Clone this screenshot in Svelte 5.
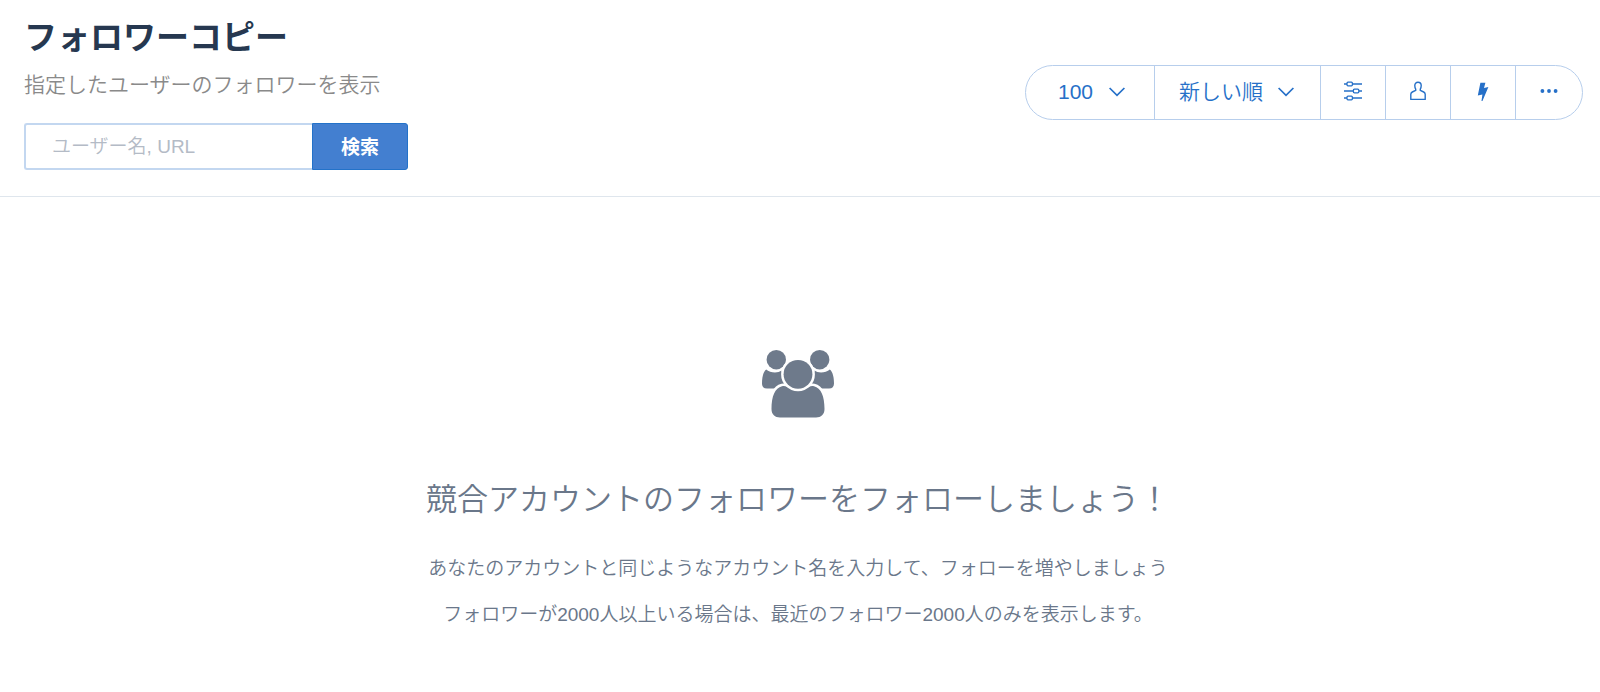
<script lang="ts">
    const limits = ["100", "200", "500"];
    const orders = ["新しい順", "古い順"];

    let account = $state("");
    let limit = $state("100");
    let order = $state("新しい順");

    function search(event: SubmitEvent) {
        event.preventDefault();
    }
</script>

<header class="page-header">
    <div class="page-header__main">
        <h1 class="page-header__title">フォロワーコピー</h1>
        <p class="page-header__description">指定したユーザーのフォロワーを表示</p>

        <form class="search" onsubmit={search}>
            <input
                class="search__input"
                type="text"
                aria-label="ユーザー名, URL"
                placeholder="ユーザー名, URL"
                bind:value={account}
            />
            <button class="search__button" type="submit">検索</button>
        </form>
    </div>

    <div class="toolbar">
        <div class="toolbar__item picker picker--limit">
            <select class="picker__select" aria-label="表示件数" bind:value={limit}>
                {#each limits as value}
                    <option {value}>{value}</option>
                {/each}
            </select>
            {@render chevron()}
        </div>
        <div class="toolbar__item picker">
            <select class="picker__select" aria-label="並び順" bind:value={order}>
                {#each orders as value}
                    <option {value}>{value}</option>
                {/each}
            </select>
            {@render chevron()}
        </div>
        <button class="toolbar__item toolbar__button" type="button" aria-label="フィルター">
            <svg width="20" height="20" viewBox="0 0 20 20" fill="none" stroke="currentColor" stroke-width="1.3">
                <path d="M1 3h3M9.5 3H19M1 10h9M16 10h3M1 17h3M9.5 17H19" />
                <rect x="4" y="1.2" width="5.4" height="3.6" rx="1" />
                <rect x="10.4" y="8.2" width="5.4" height="3.6" rx="1" />
                <rect x="4" y="15.2" width="5.4" height="3.6" rx="1" />
            </svg>
        </button>
        <button class="toolbar__item toolbar__button" type="button" aria-label="ユーザー">
            <svg width="20" height="20" viewBox="0 0 20 20" fill="none" stroke="currentColor" stroke-width="1.4" stroke-linejoin="round">
                <path d="M7.7 8.2C7 7 6.8 6 6.8 4.6C6.8 2.500 8 1.200 10 1.200s3.200 1.300 3.200 3.400c0 1.400-.2 2.400-.9 3.600v1.200l3.400 1.600c1 .5 1.500 1.200 1.500 2.200v5.200H2.800v-5.200c0-1 .5-1.700 1.500-2.200l3.400-1.600z" />
            </svg>
        </button>
        <button class="toolbar__item toolbar__button" type="button" aria-label="一括操作">
            <svg width="20" height="20" viewBox="0 0 20 20" fill="currentColor">
                <path d="M7.400 1.800h5l-1.400 5.200 4.400-.9L9.200 20.600h-.8l1-7.200-4.600 1z" />
            </svg>
        </button>
        <button class="toolbar__item toolbar__button toolbar__button--last" type="button" aria-label="その他">
            <svg width="20" height="20" viewBox="0 0 20 20" fill="currentColor">
                <circle cx="3.400" cy="10" r="1.900" />
                <circle cx="10" cy="10" r="1.900" />
                <circle cx="16.600" cy="10" r="1.900" />
            </svg>
        </button>
    </div>
</header>

<main class="empty">
    <svg class="empty__icon" width="72" height="68" viewBox="0 0 72 68" fill="currentColor" aria-hidden="true">
        <path d="M4.200 19.500C8 23 16 23.500 19.500 20.500L24 38.500H5C1.600 38.500 0 36.500 0 33.500C0 28 1 22 4.200 19.500z" />
        <path d="M67.800 19.500C64 23 56 23.500 52.500 20.500L48 38.500H67C70.400 38.500 72 36.500 72 33.500C72 28 71 22 67.800 19.500z" />
        <circle cx="14.300" cy="9.700" r="9.700" />
        <circle cx="57.700" cy="9.700" r="9.700" />
        <path
            class="empty__front"
            d="M20 36.200C13 38 9.500 46 9.500 59C9.500 64.500 13 67.500 18 67.500H54C59 67.500 62.500 64.500 62.500 59C62.500 46 59 38 52 36.200C49 35.500 47.500 36.500 46 37.500H26C24.500 36.500 23 35.500 20 36.200z"
        />
        <circle class="empty__front" cx="36" cy="24.300" r="14.400" />
    </svg>
    <h2 class="empty__title">競合アカウントのフォロワーをフォローしましょう！</h2>
    <p class="empty__text">あなたのアカウントと同じようなアカウント名を入力して、フォローを増やしましょう</p>
    <p class="empty__text">フォロワーが2000人以上いる場合は、最近のフォロワー2000人のみを表示します。</p>
</main>

{#snippet chevron()}
    <svg class="picker__chevron" width="16" height="10" viewBox="0 0 16 10" fill="none" stroke="currentColor" stroke-width="1.700" aria-hidden="true">
        <path d="M.6 1L8 8.400 15.400 1" />
    </svg>
{/snippet}

<style>
    :global(body) {
        background: #fff;
        font-family: "Liberation Sans", "Noto Sans CJK JP", sans-serif;
        font-weight: 350;
    }

    .page-header {
        display: flex;
        align-items: center;
        justify-content: space-between;
        gap: 24px;
        padding: 15px 17px 26px 24px;
        border-bottom: 1px solid #dfe6ed;
    }

    .page-header__title {
        margin: 0;
        color: #263850;
        font-size: 33px;
        font-weight: 700;
        line-height: 46px;
    }

    .page-header__description {
        margin: 8px 0 22px;
        color: #8a8a8a;
        font-size: 21px;
        line-height: 32px;
    }

    .search {
        display: flex;
        height: 47px;
    }

    .search__input,
    .search__button {
        box-sizing: border-box;
        margin: 0;
        font-family: inherit;
        font-size: 19px;
    }

    .search__input {
        width: 288px;
        padding: 0 26px;
        border: 2px solid #c3d7f0;
        border-right: 0;
        border-radius: 3px 0 0 3px;
        color: #263850;
        font-weight: 350;
        outline: none;
    }

    .search__input::placeholder {
        color: #b4bbc6;
        opacity: 1;
    }

    .search__button {
        width: 96px;
        padding: 0 0 3px;
        border: 1px solid #2372c9;
        border-radius: 0 3px 3px 0;
        background: #437fd0;
        color: #fff;
        font-weight: 700;
        cursor: pointer;
    }

    .toolbar {
        display: flex;
        height: 53px;
        border: 1px solid #b7ceec;
        border-radius: 28px;
        color: #2670c8;
        overflow: hidden;
    }

    .toolbar__item + .toolbar__item {
        border-left: 1px solid #b7ceec;
    }

    .toolbar__button {
        display: flex;
        align-items: center;
        justify-content: center;
        box-sizing: border-box;
        width: 65px;
        padding: 0 0 4px;
        border: 0;
        background: none;
        color: inherit;
        cursor: pointer;
    }

    .toolbar__button--last {
        width: 67px;
    }

    /* The chevron shares the select's cell so the whole area stays clickable. */
    .picker {
        display: grid;
        align-items: center;
    }

    .picker__select,
    .picker__chevron {
        grid-area: 1 / 1;
    }

    .picker__select {
        height: 100%;
        padding: 0 57px 2px 24px;
        border: 0;
        background: none;
        color: inherit;
        font-family: inherit;
        font-size: 21px;
        font-weight: 350;
        appearance: none;
        cursor: pointer;
        outline: none;
    }

    .picker--limit .picker__select {
        padding-right: 60px;
        padding-left: 32px;
    }

    .picker__chevron {
        justify-self: end;
        margin: 0 26px 2px 0;
        pointer-events: none;
    }

    .picker--limit .picker__chevron {
        margin-right: 29px;
    }

    .empty {
        display: flex;
        flex-direction: column;
        align-items: center;
        padding: 153px 28px 52px 24px;
        color: #6a778a;
        text-align: center;
    }

    .empty__icon {
        display: block;
        color: #6e7a8b;
    }

    .empty__front {
        stroke: #fff;
        stroke-width: 5;
        paint-order: stroke;
    }

    .empty__title {
        margin: 58px 0 22px;
        font-size: 31px;
        font-weight: 350;
        line-height: 48px;
    }

    .empty__text {
        margin: 0;
        font-size: 19px;
        line-height: 46px;
    }
</style>
